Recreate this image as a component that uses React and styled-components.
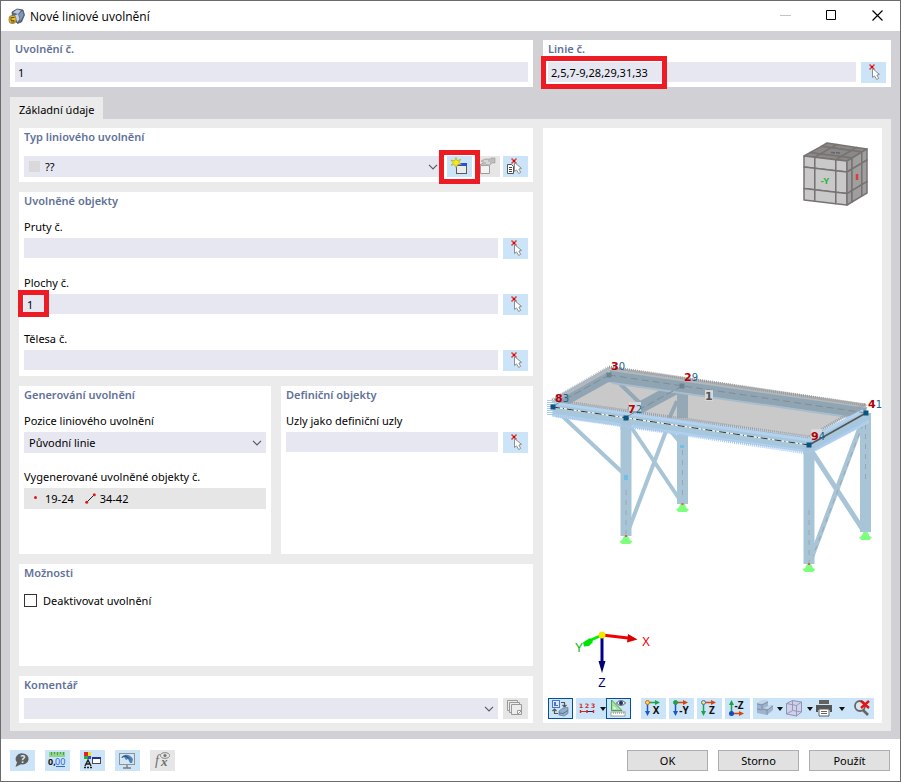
import React, { useState } from 'react';
import styled, { createGlobalStyle } from 'styled-components';

const range = (n) => Array.from({ length: n }, (_, i) => i);

/* ---------- icons ---------- */

const Icon = ({ children, w = 25, h = 21 }) => (
	<svg width={w} height={h} viewBox={`0 0 ${w} ${h}`} aria-hidden="true">
		{children}
	</svg>
);

const Cursor = () => (
	<g>
		<path d="M8.5 2.5l5 5M13.5 2.5l-5 5" stroke="#e0433f" strokeWidth="1.6" />
		<path d="M10 4h2v2h-2z" fill="#e00000" />
		<path
			d="M11.5 6.5v9l2-1.600 2.200 3.600 2-1.100-1.800-3.400 2.600-.6z"
			fill="#fff"
			stroke="#8f8f8f"
		/>
	</g>
);

const PickIcon = () => (
	<Icon>
		<Cursor />
	</Icon>
);

const PickListIcon = () => (
	<Icon>
		<path d="M4.5 8.5h4l2 2v7h-6z" fill="#fff" stroke="#555" />
		<path d="M6 11.5h3M6 13.5h3M6 15.5h3" stroke="#444" />
		<Cursor />
	</Icon>
);

const NewIcon = () => (
	<Icon>
		<rect x="9.5" y="7.5" width="10" height="10" fill="#ececec" stroke="#5a5a5a" />
		<path d="M10 7h10v3H10z" fill="#2b50d8" />
		<path
			d="M9 1.5l1.200 3.100 3.600-1.200-2 2.900 2.600 2-3.600.4L9 11.500 7.600 8.600 4.200 9.200l2-2.700-2.400-2.400 3.800.7z"
			fill="#f4ea18"
			stroke="#a69c20"
			strokeWidth=".6"
		/>
	</Icon>
);

const EditIcon = () => (
	<Icon>
		<path d="M5.5 8.5h9v9h-9z" fill="#f3f3f3" stroke="#9b9b9b" />
		<path d="M5 8h10v2H5z" fill="#a9a9a9" />
		<path d="M6 5l4-2h5l1-1h4v5h-3l-3 3-2-1-5 1-1-2 3-1z" fill="#bdbdbd" stroke="#a0a0a0" strokeWidth=".6" />
		<path d="M9 5h4M11 7h4" stroke="#efefef" />
	</Icon>
);

const CopyIcon = () => (
	<Icon>
		<g fill="#ececec" stroke="#999">
			<path d="M4.5 2.5h10v10h-10z" />
			<path d="M6.5 4.5h10v10h-10z" />
			<path d="M8.5 6.5h10v10h-10z" />
			<path d="M14.5 16.5v-4h4z" fill="#fff" />
		</g>
	</Icon>
);

const ChevronIcon = () => (
	<Icon w={10} h={6}>
		<path d="M1 .8l4 4 4-4" fill="none" stroke="#5c5c5c" strokeWidth="1.2" />
	</Icon>
);

const AppIcon = () => (
	<Icon w={17} h={17}>
		<path d="M4 4l5-3 6 1 1.500 5-3 7-4 1.500-5-6z" fill="#5b6b85" stroke="#36445c" strokeWidth=".7" />
		<path d="M5 4.500l4-3 4 1-3 3.500z" fill="#b9c8df" />
		<path d="M11 6l3.500-3 1 4-3 6z" fill="#8397b8" />
		<path d="M6 8l4-2 1.500 5-2 3z" fill="#c8d2e2" />
		<rect x="1" y="7.500" width="7" height="8" rx="3" fill="#e4bb35" stroke="#8b6d18" strokeWidth=".7" />
		<path d="M3 9.500h3.500M3 9.500v3h3v1.500H3" fill="none" stroke="#6d5514" />
	</Icon>
);

const HelpIcon = () => (
	<Icon>
		<path d="M13 3.500a6 5.500 0 1 1-2 10.800L5.500 17l1.500-4.700A6 5.500 0 0 1 13 3.500z" fill="#5f5f5f" />
		<text x="13" y="13" fontSize="10" fontWeight="700" textAnchor="middle" fill="#dcebf8">?</text>
	</Icon>
);

const UnitsIcon = () => (
	<Icon>
		<rect x="4" y="2" width="16" height="5" fill="#8ed48b" />
		<path d="M6.500 2v3M9.500 2v2M12.500 2v3M15.500 2v2M18.500 2v3" stroke="#4c9a4a" />
		<text x="3" y="15" fontSize="9" fontWeight="700" fill="#111">0,</text>
		<text x="10" y="15" fontSize="9" fill="#2f68d8">00</text>
		<path d="M11 16.500h9" stroke="#2f68d8" />
	</Icon>
);

const DisplayIcon = () => (
	<Icon>
		<path d="M4 2h4v4H4z" fill="#e02424" />
		<path d="M8 2h3v4H8z" fill="#f0dc1c" />
		<path d="M4 6h4v3H4z" fill="#28ae3a" />
		<path d="M8 6h3v3H8z" fill="#2d4fd6" />
		<path d="M5 16l3-6 3 6M6 14h4M4 17.500h2M7 17.500h2M10 17.500h2" fill="none" stroke="#222" strokeWidth="1.400" />
		<rect x="12.500" y="7.500" width="8" height="6" fill="#fff" stroke="#4a4a5c" />
		<path d="M12 7h9v2h-9z" fill="#26309a" />
	</Icon>
);

const ScreenIcon = () => (
	<Icon>
		<rect x="4.500" y="3.500" width="15" height="11" fill="#d4e6f4" stroke="#8a949b" />
		<path d="M6 8c3-5 9-4 12 1l-1 4h-2l-2-4-2 1-2-3z" fill="#4f83b6" />
		<path d="M7 7.500c3-2 5-2 8 2M10 5.500l3 2.500" fill="none" stroke="#2b5484" />
		<path d="M12 15v3M8 18h8" stroke="#7b7b7b" strokeWidth="1.400" />
	</Icon>
);

const FormulaIcon = () => (
	<Icon>
		<g fontStyle="italic" fontFamily="Liberation Serif, serif" fill="#6d6d6d">
			<text x="5" y="15" fontSize="14">f</text>
			<text x="11" y="16" fontSize="13" fontWeight="700">x</text>
		</g>
		<ellipse cx="15" cy="5.500" rx="4.500" ry="2.800" fill="none" stroke="#888" />
		<circle cx="15" cy="5.500" r="1.600" fill="#777" />
	</Icon>
);

const ViewSwapIcon = () => (
	<Icon>
		<rect x="4.500" y="2.500" width="7" height="7" fill="#dbe9fb" stroke="#4b74d6" />
		<path d="M6 4h2v3h2v1H6z" fill="#4b74d6" />
		<path d="M13 4.500h3.500v4M14.500 7l2 2 2-2M10 15.500H6.500v-4M4.500 13l2-2 2 2" fill="none" stroke="#555" strokeWidth="1.200" />
		<path d="M11 13l4-3 5-.5v6L16 18l-5-1z" fill="#93adc9" stroke="#5f7c9c" strokeWidth=".7" />
		<path d="M11 15l4 .5 5-3" fill="none" stroke="#48688c" strokeWidth=".8" />
	</Icon>
);

const NumberingIcon = () => (
	<Icon w={22}>
		<g fontSize="6" fontWeight="700" fill="#d32626" fontFamily="DejaVu Sans, sans-serif">
			<text x="1" y="10">1</text>
			<text x="7" y="10">2</text>
			<text x="13" y="10">3</text>
		</g>
		<path d="M2 13.500h7" stroke="#d32626" />
		<path d="M9 13.500h7" stroke="#1d2a6e" />
		<path d="M2.500 12v3M9 12v3M15.500 12v3" stroke="#d32626" strokeWidth="1.400" />
	</Icon>
);

const RulerEyeIcon = () => (
	<Icon>
		<path d="M5.500 2v10.500H16z" fill="#a4e0a2" stroke="#48a848" />
		<path d="M7.500 8v3h3z" fill="#f2fbf2" />
		<rect x="5" y="14" width="14" height="4" fill="#fff" stroke="#8e8e8e" strokeWidth=".8" />
		<path d="M7.500 14v2M9.500 14v2M11.500 14v2M13.500 14v2M15.500 14v2M17.500 14v2" stroke="#999" strokeWidth=".7" />
		<path d="M10.500 5c2-3 7-3 9 0-2 3-7 3-9 0z" fill="#e5edf8" stroke="#555" />
		<circle cx="15" cy="5" r="2" fill="#22306c" />
	</Icon>
);

const AXES = {
	X: { h: '#1ba34a', v: '#1a56c4', fill: '#ffd84a', dot: '#e0601c' },
	'-Y': { h: '#d9430f', v: '#1a56c4', fill: '#1ba34a', dot: '#1ba34a' },
	Z: { h: '#d9430f', v: '#1ba34a', fill: '#ffe14a', dot: '#3b72e0' },
};

const AxisIcon = ({ axis }) => {
	const c = AXES[axis];
	return (
		<Icon>
			<path d="M6.500 5v10" stroke={c.v} strokeWidth="1.500" />
			<path d="M4 13h5l-2.500 5z" fill={c.v} />
			<path d="M6 4.500h9" stroke={c.h} strokeWidth="1.500" />
			<path d="M14 2v5l5-2.500z" fill={c.h} />
			<circle cx="6.500" cy="4.500" r="2" fill={c.fill} stroke={c.dot} />
			<text x="15" y="16" fontSize="10" fontWeight="700" textAnchor="middle" fill="#111">{axis}</text>
		</Icon>
	);
};

const AxisUpIcon = () => (
	<Icon>
		<path d="M6.500 6v8" stroke="#1ba34a" strokeWidth="1.500" />
		<path d="M4 7h5L6.500 2z" fill="#1ba34a" />
		<path d="M7 15.500h9" stroke="#d9430f" strokeWidth="1.500" />
		<path d="M14 13v5l5-2.500z" fill="#d9430f" />
		<circle cx="6.500" cy="15.500" r="2.500" fill="#1947bd" />
		<text x="14" y="11" fontSize="10" fontWeight="700" textAnchor="middle" fill="#111">-Z</text>
	</Icon>
);

const SolidIcon = () => (
	<Icon w={22}>
		<path d="M2 5l6-3 5 1v5l5-1v5l-6 5-10-2z" fill="#9fb4ca" />
		<path d="M2 6l5 1 6-3M7 7v4l5 1 6-4M2 11l5 1M12 12v5" fill="none" stroke="#7390b0" strokeWidth=".9" />
		<path d="M2 5l6-3 5 1-6 3z" fill="#c7d5e4" />
		<path d="M8 10.500l5-2.500 5-1-5 4z" fill="#c7d5e4" />
	</Icon>
);

const CubeIcon = () => (
	<Icon w={22}>
		<path d="M1.500 5.500l6-3 9 1.500v10l-5 4-10-2z" fill="#cfd0ea" stroke="#9292b4" />
		<path d="M1.500 5.500l10 2 5-3.500M11.500 7.500V18M7.500 2.500v10l-6 3.500M7.500 12.500l9 1.500" fill="none" stroke="#9292b4" strokeWidth=".9" />
	</Icon>
);

const PrinterIcon = () => (
	<Icon w={18}>
		<path d="M4 2h10v4H4z" fill="#626262" />
		<path d="M1 7h16v7h-2v-2H3v2H1z" fill="#555" />
		<path d="M4 11h10v7H4z" fill="#fff" stroke="#626262" />
		<path d="M6 13.500h6M6 15.500h6" stroke="#666" />
	</Icon>
);

const ResetZoomIcon = () => (
	<Icon>
		<circle cx="11" cy="8" r="5" fill="#d8e6f0" stroke="#666" strokeWidth="1.800" />
		<path d="M14 12l5 5" stroke="#666" strokeWidth="2.600" />
		<path d="M12 3l8 7M20 3l-8 7" stroke="#e41414" strokeWidth="2.400" />
	</Icon>
);

const Arrow = () => (
	<Icon w={6} h={4}>
		<path d="M0 0h6L3 4z" fill="#111" />
	</Icon>
);

/* ---------- 3D view ---------- */

const lerp = (a, b, t) => a + (b - a) * t;
const STOPS = [0, 0.25, 0.74, 1];

// corners: top left, top right, bottom right, bottom left
const CUBE_FACES = [
	{ fill: '#8b8988', pts: [[827, 143], [867, 149], [847, 161], [804, 156]] },
	{ fill: '#c9c9c9', pts: [[804, 156], [847, 161], [847, 205], [804, 200]] },
	{ fill: '#a09f9f', pts: [[847, 161], [867, 149], [867, 193], [847, 205]] },
];

const facePoint = ([a, b, c, d], u, v) =>
	[0, 1].map((k) => lerp(lerp(a[k], b[k], u), lerp(d[k], c[k], u), v).toFixed(1)).join(',');

const NavCube = () => (
	<g stroke="#777371" strokeWidth="1.500" strokeLinejoin="round">
		{CUBE_FACES.map(({ fill, pts }) =>
			range(9).map((n) => {
				const i = n % 3;
				const j = Math.floor(n / 3);
				const [u0, u1, v0, v1] = [STOPS[i], STOPS[i + 1], STOPS[j], STOPS[j + 1]];
				return (
					<polygon
						key={fill + n}
						fill={fill}
						points={[[u0, v0], [u1, v0], [u1, v1], [u0, v1]].map(([u, v]) => facePoint(pts, u, v)).join(' ')}
					/>
				);
			})
		)}
		<path d="M831 152.500l9 .5" stroke="#626772" strokeDasharray="4 1" />
		<path d="M857 174v6" stroke="#dc3c3c" strokeWidth="2.500" />
		<text x="825" y="184" fontSize="9" fontWeight="700" textAnchor="middle" fill="#27b43c" stroke="none">-Y</text>
	</g>
);

const Support = ({ x, y }) => (
	<path d={`M${x - 2} ${y}h4l2 4 2.500 1.500-2.500 2.500h-8l-2.500-2.500 2.500-1.500z`} fill="#7dff7d" />
);

const NODES = [
	{ x: 609, y: 375, old: 3, digit: 0 },
	{ x: 682, y: 386, old: 2, digit: 9 },
	{ x: 553, y: 407, old: 8, digit: 3 },
	{ x: 626, y: 418, old: 7, digit: 2 },
	{ x: 809, y: 445, old: 9, digit: 4 },
	{ x: 866, y: 413, old: 4, digit: 1 },
];

const Model = () => (
	<g>
		<g stroke="#a7c5d7" fill="none">
			<path d="M682.500 388v116" strokeWidth="11" />
			<path d="M664 423l15 18M677 402l-50 132M629 424l51 76M557 411l66 62" strokeWidth="4" />
			<path d="M811 450l52 80M863 420l-51 136" strokeWidth="5" />
			<path d="M865.500 413v119M809 446v118M626 418v118" strokeWidth="11" />
		</g>
		<path
			d="M863 424l-50 132M682.500 450v50M626 490v44M865.500 424v60M809 510v54"
			stroke="#a3a4aa"
			strokeDasharray="5 5"
		/>
		<path d="M609 367l259 38-59 32-257-35z" fill="#c9c9c9" />
		<path d="M682.500 388v30" stroke="#94a9b5" strokeWidth="11" />
		<path d="M614 378l28 27M677 401l-9 20" stroke="#94a9b5" strokeWidth="4" />
		<path d="M609 376l257 37M557 404l52-29M630 413l52-28" stroke="#8fa5b3" strokeWidth="12" />
		<path d="M612 383l250 36" stroke="#a9bccb" strokeWidth="2" />
		<path d="M556 399l53-30M612 369l254 37" stroke="#b3b8bc" strokeWidth="4" />
		<path d="M553 409l256 36M809 446l57-30" stroke="#b2d2f0" strokeWidth="15" />
		<path d="M553 409l256 37M809 447l57-31" stroke="#a7c7dc" strokeWidth="9" />
		<path d="M626 420v10M809 446v8" stroke="#a7c5d7" strokeWidth="11" />
		<g strokeWidth="3" strokeDasharray="1 1" fill="none">
			<path d="M609 367l257 38" stroke="#999" />
			<path d="M552 400l57-33" stroke="#aab6c6" />
			<path d="M552 400l257 37 56-33" stroke="#9aa0a8" />
			<path d="M556 416l251 37 60-32" stroke="#a8c8ee" />
			<path d="M551 400v16" stroke="#a8c8ee" strokeWidth="8" />
		</g>
		<path d="M553 407l256 38" stroke="#fff" />
		<path d="M553 407l256 38" stroke="#333" strokeDasharray="7 3 1 3" />
		<path d="M609 375l257 38" stroke="#858b8e" strokeDasharray="7 4" />
		<path d="M555 405l54-30M628 416l54-30" stroke="#808c95" strokeDasharray="8 3" />
		<path d="M809 445l57-32" stroke="#555" strokeWidth="1.500" />
		<path d="M624 475h4v5h-4zM680 445h4v3h-4z" fill="#72bfe3" />
		<path d="M705 390h8v11h-8zM629 402h12v9h-12zM811 429h11v9h-11z" fill="#d5d9db" />
		{NODES.map((n) => (
			<path
				key={n.old}
				d={`M${n.x - 2.500} ${n.y - 2.500}h5v5h-5z`}
				fill={n.old === 3 || n.old === 2 ? '#6c8492' : '#0a5580'}
			/>
		))}
		<g fontFamily="DejaVu Sans, sans-serif" fontWeight="700" fontSize="11">
			{NODES.map((n) => (
				<text key={n.old} x={n.x + 2} y={n.y - 5} fill="#b40009">
					{n.old}
					<tspan fill="#17648e" fontSize="10" fontWeight="400">{n.digit}</tspan>
				</text>
			))}
			<text x="705" y="400" fill="#555">1</text>
		</g>
		<Support x={626} y={536} />
		<Support x={682.500} y={504} />
		<Support x={809} y={564} />
		<Support x={865.500} y={532} />
		<path d="M625 535h2v2h-2zM681.500 503h2v2h-2zM808 563h2v2h-2z" fill="#e05a5a" />
	</g>
);

const Axes = () => (
	<g fontFamily="Liberation Sans, sans-serif" fontSize="12" textAnchor="middle">
		<path d="M602 635l26 3" stroke="#f00000" strokeWidth="3" />
		<path d="M628 634l9.500 5.500-10.500 3z" fill="#d80000" />
		<path d="M602 635l-13 6" stroke="#00f000" strokeWidth="3" />
		<path d="M590 638l3 4-4 4-5 .5-1-4z" fill="#00e400" />
		<path d="M602 635v28" stroke="#00008b" strokeWidth="3" />
		<path d="M598.500 661h7L602 673z" fill="#00006e" />
		<circle cx="602" cy="635" r="3.500" fill="#f4e400" />
		<text x="646" y="646" fill="#f00000">X</text>
		<text x="579" y="652" fill="#00b400">Y</text>
		<text x="602" y="687" fill="#00007a">Z</text>
	</g>
);

/* ---------- form parts ---------- */

function LabeledInput({ id, label, value, onChange, mark }) {
	return (
		<Group>
			<Label htmlFor={id}>{label}</Label>
			<Row>
				<Field>
					<Input id={id} value={value} onChange={(e) => onChange(e.target.value)} />
					{mark && <Mark $kind="value" />}
				</Field>
				<IconButton aria-label="Vybrat">
					<PickIcon />
				</IconButton>
			</Row>
		</Group>
	);
}

function Combo({ id, label, swatch, options = [] }) {
	return (
		<ComboBox>
			{swatch && <Swatch />}
			<Select id={id} aria-label={label}>
				{options.map((o) => (
					<option key={o}>{o}</option>
				))}
			</Select>
			<ChevronIcon />
		</ComboBox>
	);
}

function App() {
	const [form, setForm] = useState({
		number: '1',
		lines: '2,5,7-9,28,29,31,33',
		members: '',
		surfaces: '1',
		solids: '',
		nodes: '',
	});
	const set = (key) => (value) => setForm({ ...form, [key]: value });

	return (
		<Window>
			<GlobalStyle />
			<TitleBar>
				<AppIcon />
				<WindowTitle>Nové liniové uvolnění</WindowTitle>
				<WindowButton aria-label="Minimalizovat" disabled>
					<Icon w={11} h={11}><path d="M0 5.500h11" stroke="#c4c4c4" /></Icon>
				</WindowButton>
				<WindowButton aria-label="Maximalizovat">
					<Icon w={11} h={11}><path d="M.5.5h9v9h-9z" fill="none" stroke="#000" /></Icon>
				</WindowButton>
				<WindowButton aria-label="Zavřít">
					<Icon w={11} h={11}><path d="M.5.5l10 10M10.500.5l-10 10" stroke="#000" strokeWidth="1.200" /></Icon>
				</WindowButton>
			</TitleBar>

			<Body>
				<TopRow>
					<Card $tight>
						<CardTitle as="label" htmlFor="number">Uvolnění č.</CardTitle>
						<Row $top={4}>
							<Input id="number" value={form.number} onChange={(e) => set('number')(e.target.value)} />
						</Row>
					</Card>
					<Card $tight>
						<CardTitle as="label" htmlFor="lines">Linie č.</CardTitle>
						<Row $top={4}>
							<Field>
								<Input id="lines" value={form.lines} onChange={(e) => set('lines')(e.target.value)} />
								<Mark $kind="list" />
							</Field>
							<IconButton aria-label="Vybrat linie">
								<PickIcon />
							</IconButton>
						</Row>
					</Card>
				</TopRow>

				<Tab type="button">Základní údaje</Tab>
				<Page>
					<Column>
						<Card>
							<CardTitle>Typ liniového uvolnění</CardTitle>
							<Row $top={10}>
								<Combo id="type" label="Typ liniového uvolnění" swatch options={['??']} />
								<Buttons>
									<Field>
										<IconButton aria-label="Nový typ">
											<NewIcon />
										</IconButton>
										<Mark $kind="button" />
									</Field>
									<IconButton aria-label="Upravit typ" disabled>
										<EditIcon />
									</IconButton>
									<IconButton aria-label="Vybrat typ">
										<PickListIcon />
									</IconButton>
								</Buttons>
							</Row>
						</Card>

						<Card>
							<CardTitle>Uvolněné objekty</CardTitle>
							<Groups>
								<LabeledInput id="members" label="Pruty č." value={form.members} onChange={set('members')} />
								<LabeledInput id="surfaces" label="Plochy č." value={form.surfaces} onChange={set('surfaces')} mark />
								<LabeledInput id="solids" label="Tělesa č." value={form.solids} onChange={set('solids')} />
							</Groups>
						</Card>

						<Split>
							<Card>
								<CardTitle>Generování uvolnění</CardTitle>
								<Groups>
									<Group>
										<Label htmlFor="position">Pozice liniového uvolnění</Label>
										<Combo id="position" options={['Původní linie']} />
									</Group>
									<Group>
										<Label htmlFor="generated">Vygenerované uvolněné objekty č.</Label>
										<Generated id="generated">
											<Icon w={11} h={11}><circle cx="5.500" cy="4.500" r="1.500" fill="#d81e1e" /></Icon>
											<span>19-24</span>
											<Icon w={11} h={11}>
												<path d="M1.500 9.500l8-8" stroke="#222" />
												<circle cx="1.700" cy="9.300" r="1.500" fill="#d81e1e" />
												<circle cx="9.300" cy="1.700" r="1.500" fill="#d81e1e" />
											</Icon>
											<span>34-42</span>
										</Generated>
									</Group>
								</Groups>
							</Card>
							<Card>
								<CardTitle>Definiční objekty</CardTitle>
								<Groups>
									<LabeledInput id="nodes" label="Uzly jako definiční uzly" value={form.nodes} onChange={set('nodes')} />
								</Groups>
							</Card>
						</Split>

						<Card>
							<CardTitle>Možnosti</CardTitle>
							<CheckLabel>
								<Checkbox type="checkbox" />
								Deaktivovat uvolnění
							</CheckLabel>
						</Card>

						<Card $tight>
							<CardTitle>Komentář</CardTitle>
							<Row $top={4}>
								<Combo id="comment" label="Komentář" />
								<IconButton aria-label="Komentáře" disabled>
									<CopyIcon />
								</IconButton>
							</Row>
						</Card>
					</Column>

					<Viewport>
						<Scene viewBox="543 128 339 565" role="img" aria-label="Model">
							<NavCube />
							<Model />
							<Axes />
						</Scene>
						<Toolbar>
							<IconButton $active aria-label="Přepnout pohled"><ViewSwapIcon /></IconButton>
							<Tools $after>
								<ToolButton aria-label="Číslování"><NumberingIcon /><Arrow /></ToolButton>
								<IconButton $active aria-label="Rozměry"><RulerEyeIcon /></IconButton>
							</Tools>
							{['X', '-Y', 'Z'].map((axis) => (
								<IconButton key={axis} aria-label={`Pohled ${axis}`}><AxisIcon axis={axis} /></IconButton>
							))}
							<IconButton aria-label="Pohled -Z"><AxisUpIcon /></IconButton>
							<Tools>
								<ToolButton aria-label="Zobrazení těles"><SolidIcon /><Arrow /></ToolButton>
								<ToolButton aria-label="Drátový model"><CubeIcon /><Arrow /></ToolButton>
								<ToolButton $wide aria-label="Tisk"><PrinterIcon /><Arrow /></ToolButton>
								<IconButton aria-label="Zrušit zvětšení"><ResetZoomIcon /></IconButton>
							</Tools>
						</Toolbar>
					</Viewport>
				</Page>
			</Body>

			<Footer>
				<FooterGroup>
					<IconButton aria-label="Nápověda"><HelpIcon /></IconButton>
					<IconButton aria-label="Jednotky"><UnitsIcon /></IconButton>
					<IconButton aria-label="Zobrazení"><DisplayIcon /></IconButton>
					<IconButton aria-label="Obrazovka"><ScreenIcon /></IconButton>
					<IconButton aria-label="Vzorec" disabled><FormulaIcon /></IconButton>
				</FooterGroup>
				<FooterGroup>
					<PushButton>OK</PushButton>
					<PushButton>Storno</PushButton>
					<PushButton>Použít</PushButton>
				</FooterGroup>
			</Footer>
		</Window>
	);
}

export default App;

const GlobalStyle = createGlobalStyle`
	* {
		box-sizing: border-box;
	}
	body {
		margin: 0;
		color: #000;
		font-family: 'Noto Sans', 'Open Sans', sans-serif;
		font-size: 11px;
	}
	button, input, select {
		font: inherit;
		color: inherit;
	}
	svg {
		display: block;
		flex: none;
	}
`;

const Window = styled.div`
	display: flex;
	flex-direction: column;
	min-height: 100vh;
	background: white;
	border: 1px solid #6b6b6d;
`;

const TitleBar = styled.header`
	display: flex;
	align-items: center;
	height: 30px;
	padding-left: 7px;
`;

const WindowTitle = styled.h1`
	flex: 1;
	margin: 0 0 0 5px;
	font-family: 'Open Sans', 'Noto Sans', sans-serif;
	font-size: 12px;
	font-weight: 400;
`;

const WindowButton = styled.button`
	display: flex;
	align-items: center;
	justify-content: center;
	width: 46px;
	height: 30px;
	padding: 0 0 2px;
	border: none;
	background: none;
`;

const Body = styled.main`
	display: flex;
	flex: 1;
	flex-direction: column;
	align-items: stretch;
	padding: 9px 9px 8px;
	background: #d1d0d5;
`;

const TopRow = styled.div`
	display: grid;
	grid-template-columns: 523fr 348fr;
	gap: 10px;
	margin-bottom: 10px;
`;

const Card = styled.section`
	min-width: 0;
	padding: 0 5px ${(props) => (props.$tight ? 4 : 5)}px;
	background: white;
`;

const CardTitle = styled.h2`
	display: block;
	height: 18px;
	margin: 0;
	color: #5f7199;
	font-size: 11px;
	font-weight: 600;
	line-height: 18px;
`;

const Row = styled.div`
	display: flex;
	gap: 5px;
	margin-top: ${(props) => props.$top || 0}px;
`;

const Field = styled.div`
	position: relative;
	display: flex;
	flex: 1;
	min-width: 0;
`;

const Input = styled.input`
	flex: 1;
	min-width: 0;
	height: 20px;
	padding: 1px 3px 0;
	border: none;
	outline: none;
	background: #e7e7f2;
`;

const marks = {
	list: 'top: -6px; left: -7px; width: 126px; height: 33px;',
	value: 'top: -4px; left: -6px; width: 31px; height: 27px;',
	button: 'top: -6px; left: -8px; width: 41px; height: 34px;',
};

const Mark = styled.span`
	position: absolute;
	z-index: 1;
	border: 5px solid #ed1c24;
	pointer-events: none;
	${(props) => marks[props.$kind]}
`;

const IconButton = styled.button`
	display: flex;
	align-items: center;
	justify-content: center;
	flex: none;
	width: 25px;
	height: 21px;
	padding: 0;
	border: none;
	background: ${(props) => (props.disabled ? '#e6e6e6' : '#cce4f7')};
	outline: ${(props) => (props.$active ? '1px solid #00539c' : 'none')};
	outline-offset: -1px;
`;

const Buttons = styled.div`
	display: flex;
	gap: 3px;
`;

const ComboBox = styled.div`
	display: flex;
	align-items: center;
	flex: 1;
	min-width: 0;
	height: 21px;
	padding: 0 4px 0 5px;
	background: #e7e7f2;
`;

const Swatch = styled.span`
	width: 11px;
	height: 11px;
	margin-right: 5px;
	background: #d9d9d9;
`;

const Select = styled.select`
	flex: 1;
	min-width: 0;
	height: 21px;
	padding: 0;
	border: none;
	outline: none;
	background: none;
	appearance: none;
`;

const Tab = styled.button`
	align-self: flex-start;
	height: 22px;
	padding: 3px 9px 0;
	border: none;
	background: #ebebeb;
`;

const Page = styled.div`
	display: grid;
	flex: 1;
	grid-template-columns: 514fr 339fr;
	gap: 10px;
	padding: 9px 9px 8px;
	background: #ebebeb;
`;

const Column = styled.div`
	display: grid;
	grid-template-rows: auto auto minmax(168px, auto) minmax(102px, 1fr) auto;
	gap: 10px;
	min-width: 0;
`;

const Split = styled.div`
	display: grid;
	grid-template-columns: 1fr 1fr;
	gap: 10px;
`;

const Groups = styled.div`
	display: flex;
	flex-direction: column;
	gap: 15px;
	margin-top: 8px;
`;

const Group = styled.div`
	display: flex;
	flex-direction: column;
`;

const Label = styled.label`
	height: 20px;
	line-height: 18px;
`;

const Generated = styled.output`
	display: flex;
	align-items: center;
	gap: 4px;
	height: 21px;
	padding: 0 6px;
	background: #e6e6e6;

	span + svg {
		margin-left: 7px;
	}
`;

const CheckLabel = styled.label`
	display: flex;
	align-items: center;
	gap: 6px;
	width: fit-content;
	margin-top: 11px;
`;

const Checkbox = styled.input`
	width: 13px;
	height: 13px;
	margin: 0;
	border: 1px solid #333;
	background: white;
	appearance: none;

	&:checked {
		background: #333;
	}
`;

const Viewport = styled.section`
	display: flex;
	flex-direction: column;
	min-width: 0;
	padding-bottom: 4px;
	background: white;
`;

const Scene = styled.svg`
	flex: 1;
	width: 100%;
	min-height: 0;
`;

const Toolbar = styled.div`
	display: flex;
	gap: 3px;
	margin: 5px 5px 0;
`;

const Tools = styled.div`
	display: flex;
	margin-right: ${(props) => (props.$after ? 7 : 0)}px;
`;

const ToolButton = styled.button`
	display: flex;
	align-items: center;
	justify-content: space-between;
	height: 21px;
	padding: 0 ${(props) => (props.$wide ? 4 : 0)}px 0 2px;
	border: none;
	background: #cce4f7;
	${(props) => props.$wide && 'gap: 6px;'}
`;

const Footer = styled.footer`
	display: flex;
	align-items: center;
	justify-content: space-between;
	height: 42px;
	padding: 0 10px 0 9px;
`;

const FooterGroup = styled.div`
	display: flex;
	gap: 10px;
`;

const PushButton = styled.button`
	width: 81px;
	height: 21px;
	padding: 0;
	border: 1px solid #adadad;
	background: #e1e1e1;
`;
